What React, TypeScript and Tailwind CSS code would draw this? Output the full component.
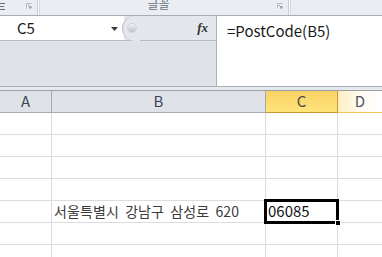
import { ReactNode } from 'react';

const cellFont = { fontFamily: '"Noto Sans CJK KR", "Noto Sans", sans-serif' };

function Launcher() {
  return (
    <svg width="6" height="6" viewBox="0 0 6 6" className="block">
      <path d="M0.5 5.5V0.5H5.5" stroke="#b4b9c0" strokeWidth="1" fill="none" />
      <path d="M2 2L5 5M5 3V5H3" stroke="#8a9099" strokeWidth="1" fill="none" />
    </svg>
  );
}

function Separator() {
  return (
    <div className="flex h-full">
      <div className="w-px bg-[#c8cdd4]" />
      <div className="w-px bg-[#fbfcfd]" />
      <div className="w-px bg-[#d4d8de]" />
    </div>
  );
}

function Header({ children, active, glow }: { children: ReactNode; active?: boolean; glow?: boolean }) {
  let cls = 'bg-[#dfe3e8] border-r border-b border-[#a5aab1] text-[#3c4656]';
  if (active) cls = 'bg-gradient-to-b from-[#f9d265] to-[#ffe47c] border-r border-b border-[#c9973b] text-[#4a4a4a]';
  if (glow) cls = 'bg-gradient-to-r from-[#fff0bd] via-[#fffaf0] to-[#ffffff] border-b border-[#f2c55c] text-[#4a5568]';
  return (
    <div className={`h-[22px] flex items-center justify-center text-[15px] ${cls}`} style={cellFont}>
      {children}
    </div>
  );
}

function Cell({ children, last }: { children?: ReactNode; last?: boolean }) {
  return (
    <div
      className={`h-[22px] border-b border-[#dadcdd] ${last ? '' : 'border-r'} flex items-center overflow-visible whitespace-nowrap`}
    >
      {children}
    </div>
  );
}

export default function App() {
  const rows = [1, 2, 3, 4, 5, 6, 7];

  return (
    <div className="relative w-[382px] h-[257px] overflow-hidden bg-white">
      {/* ribbon bottom strip */}
      <div className="h-[15px] bg-[#eaedf1] flex">
        <div className="w-[37px] relative flex items-start">
          <svg width="6" height="8" viewBox="0 0 6 8" className="mt-[2px]">
            <path d="M0 1.5H5M0 4.5H4M0 7.5H5" stroke="#6a7280" strokeWidth="1" />
          </svg>
          <div className="ml-auto mr-[5px] mt-[3px]">
            <Launcher />
          </div>
        </div>
        <Separator />
        <div className="w-[248px] flex items-start">
          <div className="flex-1 flex justify-center overflow-hidden h-[12px]">
            <span
              className="text-[12px] leading-[12px] -mt-[2px] text-[#6b7480]"
              style={cellFont}
            >
              글꼴
            </span>
          </div>
          <div className="mr-[5px] mt-[3px]">
            <Launcher />
          </div>
        </div>
        <Separator />
        <div className="flex-1" />
      </div>
      <div className="h-px bg-[#a7adb5]" />

      {/* formula bar */}
      <div className="h-[70px] flex">
        <div className="w-[216px] flex flex-col bg-[#dfe3e8]">
          <div className="h-[25px] flex border-b border-[#b6bcc5]">
            <div className="w-[124px] bg-white flex items-center">
              <span className="ml-[17px] text-[15px] text-[#1a1a1a]" style={cellFont}>
                C5
              </span>
              <svg width="7" height="4" viewBox="0 0 7 4" className="ml-auto mr-[6px] mt-[2px]">
                <path d="M0 0H7L3.5 4Z" fill="#3b3b3b" />
              </svg>
            </div>
            <div className="flex-1 flex items-center bg-[#e4e7eb]">
              <div className="h-[25px] w-[18px] -ml-[2px] rounded-l-full border-l border-[#b6bcc5] bg-[#e4e7eb] flex items-center">
                <div className="ml-[4px] w-[10px] h-[10px] rounded-full bg-gradient-to-b from-[#f2f4f6] to-[#bfc4ca] border border-[#d0d4da]" />
              </div>
              <span
                className="ml-auto mr-[8px] text-[13px] italic font-bold text-[#333]"
                style={{ fontFamily: '"Liberation Serif", serif' }}
              >
                fx
              </span>
            </div>
          </div>
          <div className="flex-1" />
        </div>
        <div className="w-px bg-[#a9afb7]" />
        <div className="flex-1 bg-white">
          <div
            className="ml-[10px] mt-[4px] text-[15px] text-[#1a1a1a]"
            style={cellFont}
          >
            =PostCode(B5)
          </div>
        </div>
      </div>
      <div className="h-px bg-[#a9afb7]" />
      <div className="h-[3px] bg-[#e6e9ed]" />
      <div className="h-px bg-[#9aa0a8]" />

      {/* sheet grid */}
      <div className="grid grid-cols-[52px_214px_72px_1fr]">
        <Header>A</Header>
        <Header>B</Header>
        <Header active>C</Header>
        <Header glow>D</Header>
        {rows.map((r) => (
          <div key={r} className="contents">
            <Cell />
            <Cell>
              {r === 5 && (
                <span
                  className="ml-[2px] text-[14px] tracking-[0.1px] [word-spacing:3px] text-[#3a3a3a]"
                  style={cellFont}
                >
                  서울특별시 강남구 삼성로 620
                </span>
              )}
            </Cell>
            <Cell>
              {r === 5 && (
                <span className="ml-[2px] text-[15px] text-[#111]" style={cellFont}>
                  06085
                </span>
              )}
            </Cell>
            <Cell last />
          </div>
        ))}
      </div>

      {/* active cell outline */}
      <div className="absolute left-[264px] top-[199px] w-[75px] h-[25px] border-[3px] border-black pointer-events-none" />
      <div className="absolute left-[335px] top-[220px] w-[6px] h-[6px] bg-black border border-white pointer-events-none" />
    </div>
  );
}
